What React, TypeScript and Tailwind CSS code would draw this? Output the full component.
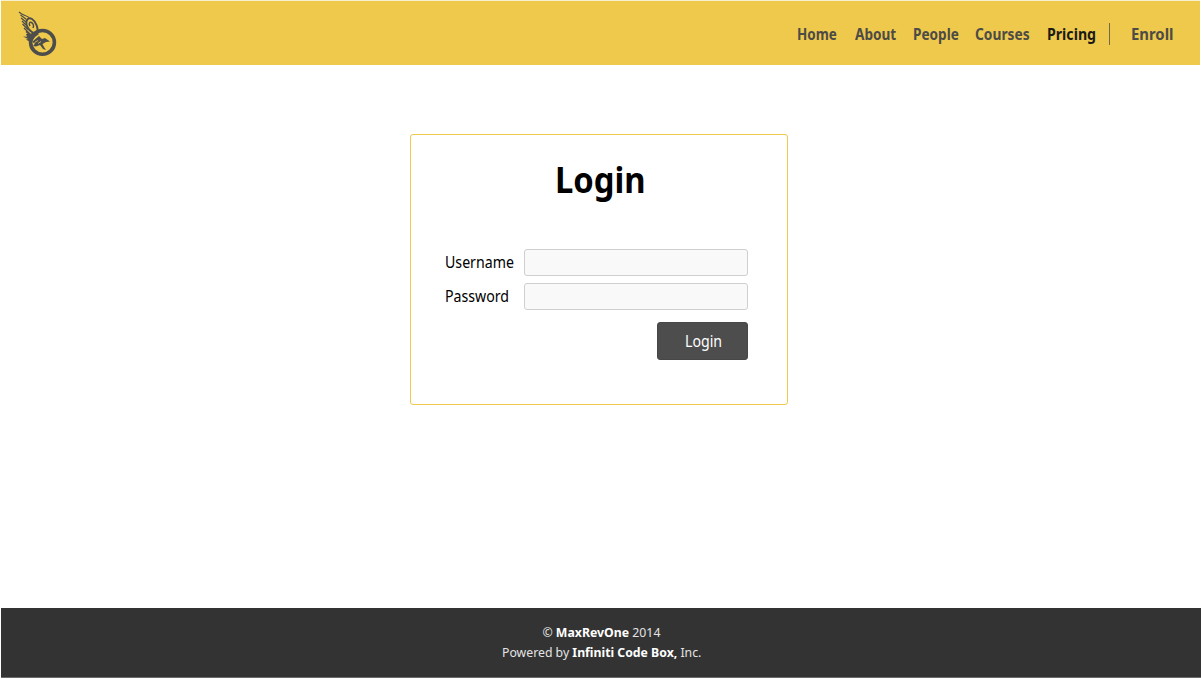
import React from "react";

function Logo() {
  return (
    <svg className="block h-[48px] w-[42px]" viewBox="17 10 42 48" fill="none" stroke="#4d4d4b" aria-label="MaxRevOne">
      <circle cx="42.5" cy="42.4" r="11.9" strokeWidth="3.6" />
      <path strokeWidth="1.200" d="M19 12C22 15 25 15 29 17.500M20.500 15L26.500 19.500M21 18L26 22M22 21L26 25M22.500 24L28 29.500M24 28L30 34M26 31.500L32 37" />
      <path strokeWidth="1.900" d="M37 34C39 29 36 21.500 32 19C28.500 17 25.500 20 26.500 24.500C27.500 28.500 31 32 35 33.500" />
      <path strokeWidth="1.500" d="M30 26C28.500 23.500 29.500 21.500 31.500 22.500C33.500 23.500 34 26 33 28" />
      <path fill="#4d4d4b" stroke="none" d="M23 36.500L27 36.700L26 34L31 33.500L36 31.500L39 34L35 37L31 43L28.500 41L26 39.500L28 39Z" />
      <path fill="#4d4d4b" stroke="none" d="M32 42L36 38.500L39 36L42 39L45 38L50 41.500L46 42L42.500 44L44 47L46 50L43 49L40 45L36 46.500L33 46L35 43.500Z" />
      <path stroke="#efc94c" strokeWidth=".8" d="M34.500 42.500L38 40.500M38 43.500L41 41.500" />
    </svg>
  );
}

const links = [
  { label: "Home", cell: "w-[58px]", scale: "scale-x-[0.84]" },
  { label: "About", cell: "w-[58px]", scale: "scale-x-[0.85]" },
  { label: "People", cell: "w-[62px]", scale: "scale-x-[0.85]" },
  { label: "Courses", cell: "w-[72px]", scale: "scale-x-[0.86]" },
  { label: "Pricing", cell: "w-[62px] text-[#1b1a15]", scale: "scale-x-[0.885]" },
];

function Field({ label, type, scale }: { label: string; type: string; scale: string }) {
  return (
    <label className="flex h-[27px] items-center">
      <span className="w-[79px] pb-px text-[16px] leading-[26px] text-black">
        <span className={`inline-block origin-left whitespace-nowrap ${scale}`}>{label}</span>
      </span>
      <input type={type} className="h-[27px] w-[224px] rounded-[3px] border border-[#cfcfcf] bg-[#f9f9f9] px-2 outline-none" />
    </label>
  );
}

export default function App() {
  return (
    <div className="flex h-[679px] w-[1201px] flex-col bg-white pl-px font-['Noto_Sans',sans-serif]">
      <header className="flex h-[65px] w-[1199px] shrink-0 items-start border-t border-[#f7f0cf] bg-[#efc94c] pl-4">
        <div className="pt-[9px]"><Logo /></div>
        <nav className="ml-[738px] mt-[22px] flex h-[22px] items-center text-[16px] font-bold leading-[22px] text-[#4d4b45]">
          {links.map((l) => (
            <a key={l.label} href="#" className={`shrink-0 ${l.cell}`}>
              <span className={`inline-block origin-left whitespace-nowrap ${l.scale}`}>{l.label}</span>
            </a>
          ))}
          <a href="#" className="h-[22px] shrink-0 border-l border-[#746846] pl-[21px]">
            <span className="inline-block origin-left scale-x-[0.93] whitespace-nowrap">Enroll</span>
          </a>
        </nav>
      </header>
      <main className="flex-1 pt-[69px]">
        <form className="ml-[409px] flex h-[271px] w-[378px] flex-col rounded-[3px] border border-[#efc94c] pl-[34px]">
          <h1 className="mt-[21px] h-[93px] pl-[110px] text-[36px] font-bold leading-[48px] text-black">
            <span className="inline-block origin-left scale-x-[0.91]">Login</span>
          </h1>
          <div className="flex flex-col gap-[7px]">
            <Field label="Username" type="text" scale="scale-x-[0.885]" />
            <Field label="Password" type="password" scale="scale-x-[0.885]" />
          </div>
          <button type="button" className="ml-[212px] mt-[12px] h-[38px] w-[91px] rounded-[3px] border border-[#474747] bg-[#4d4d4d] pl-[27px] text-left text-[16px] text-white">
            <span className="inline-block origin-left scale-x-[0.885]">Login</span>
          </button>
        </form>
      </main>
      <footer className="mb-px h-[70px] shrink-0 border-b border-[#6b6b6b] bg-[#333] pt-[14px] text-[13px] leading-5 text-[#e4e4e4]">
        <p className="flex justify-center"><span className="scale-x-[0.945] whitespace-nowrap">© <b className="text-white">MaxRevOne</b> 2014</span></p>
        <p className="flex justify-center pl-px"><span className="scale-x-[0.943] whitespace-nowrap">Powered by <b className="text-white">Infiniti Code Box,</b> Inc.</span></p>
      </footer>
    </div>
  );
}
